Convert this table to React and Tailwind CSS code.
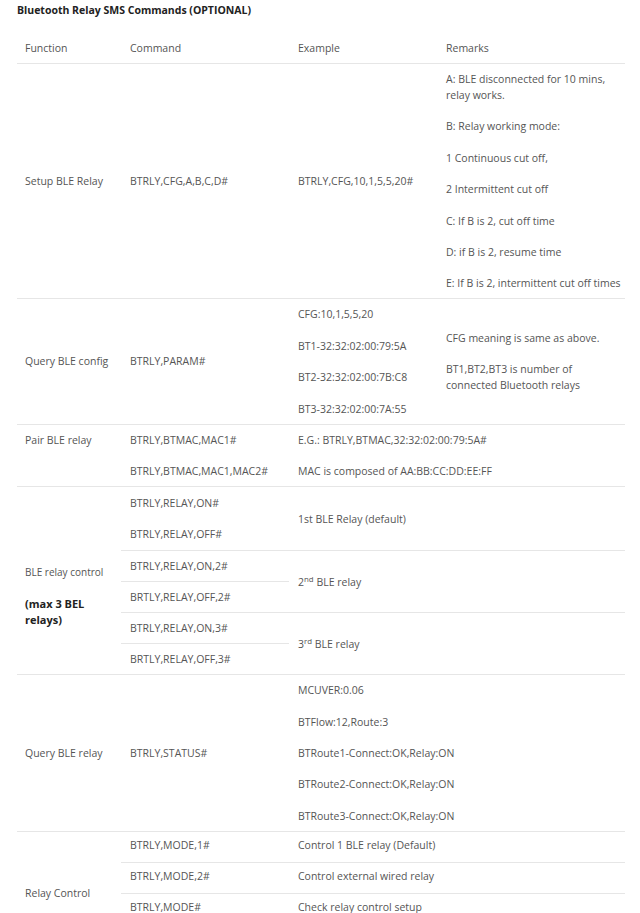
const Lines = ({ items, className = '' }) => (
  <div className={`flex flex-col gap-[15.4px] ${className}`}>
    {items.map((t, i) => (
      <div key={i} className="leading-[16px] whitespace-nowrap">{t}</div>
    ))}
  </div>
);

const Row = ({ children, last = false }) => (
  <div className={`flex ${last ? '' : 'border-b border-[#e6e6e6]'}`}>{children}</div>
);

export default function App() {
  return (
    <div className="min-h-[913px] bg-white px-[17px] pt-[2px] font-['Open_Sans',sans-serif] text-[10.5px] text-[#555]">
      <h1 className="mb-[15px] text-[10.5px] font-bold leading-[16px] text-[#222]">
        Bluetooth Relay SMS Commands (OPTIONAL)
      </h1>

      <div className="w-[608px]">
        {/* header */}
        <Row>
          <div className="w-[104px] py-[7px] pl-[8px] leading-[16px]">Function</div>
          <div className="w-[168px] px-[9px] py-[7px] leading-[16px]">Command</div>
          <div className="w-[148px] px-[9px] py-[7px] leading-[16px]">Example</div>
          <div className="w-[188px] px-[9px] py-[7px] leading-[16px]">Remarks</div>
        </Row>

        {/* setup */}
        <Row>
          <div className="flex w-[104px] items-center py-[7px] pl-[8px] leading-[16px]">Setup BLE Relay</div>
          <div className="flex w-[168px] items-center px-[9px] py-[7px] leading-[16px]">BTRLY,CFG,A,B,C,D#</div>
          <div className="flex w-[148px] items-center px-[9px] py-[7px] leading-[16px]">BTRLY,CFG,10,1,5,5,20#</div>
          <div className="w-[188px] px-[9px] py-[7px]">
            <Lines
              items={[
                <>A: BLE disconnected for 10 mins,<br />relay works.</>,
                'B: Relay working mode:',
                '1 Continuous cut off,',
                '2 Intermittent cut off',
                'C: If B is 2, cut off time',
                'D: if B is 2, resume time',
                'E: If B is 2, intermittent cut off times',
              ]}
            />
          </div>
        </Row>

        {/* query config */}
        <Row>
          <div className="flex w-[104px] items-center py-[7px] pl-[8px] leading-[16px]">Query BLE config</div>
          <div className="flex w-[168px] items-center px-[9px] py-[7px] leading-[16px]">BTRLY,PARAM#</div>
          <div className="w-[148px] px-[9px] py-[7px]">
            <Lines items={['CFG:10,1,5,5,20', 'BT1-32:32:02:00:79:5A', 'BT2-32:32:02:00:7B:C8', 'BT3-32:32:02:00:7A:55']} />
          </div>
          <div className="flex w-[188px] items-center px-[9px] py-[7px]">
            <Lines items={['CFG meaning is same as above.', <>BT1,BT2,BT3 is number of<br />connected Bluetooth relays</>]} />
          </div>
        </Row>

        {/* pair */}
        <Row>
          <div className="w-[104px] py-[7px] pl-[8px] leading-[16px]">Pair BLE relay</div>
          <div className="w-[168px] px-[9px] py-[7px]">
            <Lines items={['BTRLY,BTMAC,MAC1#', 'BTRLY,BTMAC,MAC1,MAC2#']} />
          </div>
          <div className="w-[336px] px-[9px] py-[7px]">
            <Lines items={['E.G.: BTRLY,BTMAC,32:32:02:00:79:5A#', 'MAC is composed of AA:BB:CC:DD:EE:FF']} />
          </div>
        </Row>

        {/* relay control */}
        <Row>
          <div className="flex w-[104px] flex-col justify-center pl-[8px]">
            <div className="flex flex-col gap-[15.4px] pt-[31px]">
              <div className="text-[10px] leading-[16px]">BLE relay control</div>
              <div className="text-[11px] font-bold leading-[16px] text-[#222]">
                (max 3 BEL<br />relays)
              </div>
            </div>
          </div>
          <div className="flex w-[504px] flex-col">
            <Row>
              <div className="w-[168px] px-[9px] py-[8px]">
                <Lines items={['BTRLY,RELAY,ON#', 'BTRLY,RELAY,OFF#']} />
              </div>
              <div className="flex w-[336px] items-center px-[9px] leading-[16px]">1st BLE Relay (default)</div>
            </Row>
            <Row>
              <div className="flex w-[168px] flex-col">
                <div className="border-b border-[#e6e6e6] px-[9px] py-[7px] leading-[16px]">BTRLY,RELAY,ON,2#</div>
                <div className="px-[9px] py-[7px] leading-[16px]">BRTLY,RELAY,OFF,2#</div>
              </div>
              <div className="flex w-[336px] items-center px-[9px] leading-[16px]">
                <span>2<sup>nd</sup> BLE relay</span>
              </div>
            </Row>
            <Row last>
              <div className="flex w-[168px] flex-col">
                <div className="border-b border-[#e6e6e6] px-[9px] py-[7px] leading-[16px]">BTRLY,RELAY,ON,3#</div>
                <div className="px-[9px] py-[7px] leading-[16px]">BRTLY,RELAY,OFF,3#</div>
              </div>
              <div className="flex w-[336px] items-center px-[9px] leading-[16px]">
                <span>3<sup>rd</sup> BLE relay</span>
              </div>
            </Row>
          </div>
        </Row>

        {/* status */}
        <Row>
          <div className="flex w-[104px] items-center py-[7px] pl-[8px] leading-[16px]">Query BLE relay</div>
          <div className="flex w-[168px] items-center px-[9px] py-[7px] leading-[16px]">BTRLY,STATUS#</div>
          <div className="w-[336px] px-[9px] py-[7px]">
            <Lines
              items={[
                'MCUVER:0.06',
                'BTFlow:12,Route:3',
                'BTRoute1-Connect:OK,Relay:ON',
                'BTRoute2-Connect:OK,Relay:ON',
                'BTRoute3-Connect:OK,Relay:ON',
              ]}
            />
          </div>
        </Row>

        {/* mode */}
        <Row>
          <div className="flex w-[104px] items-center pl-[8px] leading-[16px]">Relay Control</div>
          <div className="flex w-[504px] flex-col">
            {[
              ['BTRLY,MODE,1#', 'Control 1 BLE relay (Default)'],
              ['BTRLY,MODE,2#', 'Control external wired relay'],
              ['BTRLY,MODE#', 'Check relay control setup'],
              ['', ''],
            ].map(([c, e], i) => (
              <Row key={i} last={i === 3}>
                <div className="h-[30px] w-[168px] px-[9px] pt-[5px] pb-[9px] leading-[16px]">{c}</div>
                <div className="h-[30px] w-[336px] px-[9px] pt-[5px] pb-[9px] leading-[16px]">{e}</div>
              </Row>
            ))}
          </div>
        </Row>
      </div>
    </div>
  );
}
